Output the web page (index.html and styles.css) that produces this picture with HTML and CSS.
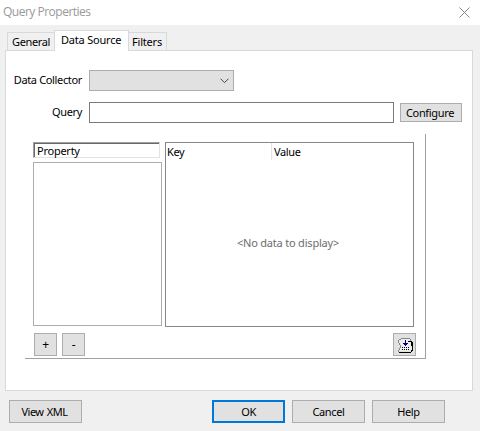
FILE: index.html
```html
<!DOCTYPE html>
<html lang="en">
<head>
<meta charset="utf-8">
<title>Query Properties</title>
<link rel="stylesheet" href="styles.css">
</head>
<body>
<div class="dialog">
  <header class="titlebar">
    <span class="title">Query Properties</span>
    <svg class="close" width="11" height="11" viewBox="0 0 11 11"><path d="M.5.5l10 10M10.5.5l-10 10"/></svg>
  </header>
  <nav class="tabs">
    <div class="tab">General</div>
    <div class="tab active">Data Source</div>
    <div class="tab last">Filters</div>
  </nav>
  <main class="page">
    <div class="row collector">
      <label>Data Collector</label>
      <div class="combo"><svg width="9" height="6" viewBox="0 0 9 6"><path d="M.5.7l4 4 4-4"/></svg></div>
    </div>
    <div class="row query">
      <label>Query</label>
      <div class="input"></div>
      <div class="button configure">Configure</div>
    </div>
    <section class="group">
      <div class="lists">
        <div class="left">
          <div class="property"><div class="property-inner">Property</div></div>
          <div class="listbox"></div>
        </div>
        <div class="grid">
          <div class="heads"><div class="head key">Key</div><div class="head">Value</div></div>
          <div class="empty">&lt;No data to display&gt;</div>
        </div>
      </div>
      <div class="tools">
        <div class="button small">+</div>
        <div class="button small">-</div>
        <div class="button small export">
          <svg width="16" height="16" viewBox="0 0 16 16" shape-rendering="crispEdges">
            <path fill="#ededed" d="M3 1h9l2 3v9H2V9L1 7V2z"/>
            <path fill="#858585" d="M3 0h9v1H3zM1 1h2v1H1zM0 2h1v3H0zM1 5h1v2H1zM2 7h1v3H2zM1 10h1v2H1zM0 12h1v2H0zM12 1h1v2h-1z"/>
            <path fill="#000" d="M10 3h3v1h-3zM13 3h1v2h-1zM14 4h1v3h-1zM13 4h1v4h-1zM14 7h1v6h-1zM13 12h1v2h-1zM1 14h12v1H1zM4 9h1v1H4zM6 9h1v1H6zM8 9h1v1H8zM10 9h1v1h-1zM4 11h1v1H4zM6 11h1v1H6zM8 11h1v1H8zM10 11h1v1h-1z"/>
            <path fill="#000080" d="M7 2h1v3H7zM5 5h5v1H5zM6 6h3v1H6zM7 7h1v1H7z"/>
          </svg>
        </div>
      </div>
    </section>
  </main>
  <footer class="footer">
    <div class="button wide view">View XML</div>
    <div class="button wide ok">OK</div>
    <div class="button wide">Cancel</div>
    <div class="button wide">Help</div>
  </footer>
</div>
</body>
</html>
```
FILE: styles.css
```css
* { box-sizing: border-box; }
body { margin: 0; background: #f0f0f0; color: #000; font: 11px/14px "Noto Sans", "Liberation Sans", sans-serif; letter-spacing: -.35px; }
.dialog { width: 480px; height: 431px; overflow: hidden; white-space: nowrap; }
.titlebar { height: 25px; background: #fff; display: flex; justify-content: space-between; padding: 4px 10px 0 3px; color: #999; font: 12px/16px "Open Sans", sans-serif; }
.title { letter-spacing: -.5px; }
.close { margin-top: 3px; fill: none; stroke: #858585; }
.tabs { height: 26px; display: flex; align-items: flex-end; padding-left: 7px; position: relative; }
.tab { width: 47px; height: 19px; border: 1px solid #d9d9d9; border-right: 0; padding: 2px 0 0 4px; }
.tab.active { width: 75px; height: 21px; border-right: 1px solid #d9d9d9; border-bottom: 0; background: #fff; padding-left: 6px; letter-spacing: -.2px; }
.tab.last { width: 38px; border-left: 0; border-right: 1px solid #d9d9d9; padding-left: 3px; letter-spacing: -.2px; }
.page { margin: -1px 7px 0 5px; height: 341px; border: 1px solid #d9d9d9; background: #fff; }
.row { display: flex; align-items: center; height: 21px; }
.row label { width: 76px; margin-right: 7px; padding-bottom: 2px; text-align: right; }
.collector { margin-top: 19px; }
.query { margin-top: 11px; }
.combo { width: 145px; height: 21px; background: #e1e1e1; border: 1px solid #adadad; display: flex; justify-content: flex-end; align-items: center; padding-right: 4px; }
.combo svg { fill: none; stroke: #444; }
.input { width: 305px; height: 21px; border: 1px solid #7a7a7a; margin-right: 6px; }
.button { background: #e1e1e1; border: 1px solid #adadad; display: flex; align-items: center; justify-content: center; }
.configure { width: 62px; height: 19px; padding-right: 2px; }
.group { margin: 11px 0 0 19px; width: 401px; height: 225px; border-right: 1px solid #a0a0a0; border-bottom: 1px solid #a0a0a0; padding: 8px 0 0 8px; }
.lists { display: flex; gap: 3px; height: 185px; }
.left { width: 129px; }
.property { width: 127px; height: 16px; border: 1px solid #e3e3e3; border-top-color: #a0a0a0; border-left-color: #a0a0a0; letter-spacing: -.25px; }
.property-inner { height: 14px; border-top: 1px solid #696969; border-left: 1px solid #696969; padding-left: 2px; line-height: 13px; }
.listbox { height: 164px; margin-top: 4px; border: 1px solid #adadad; }
.grid { width: 249px; height: 185px; border: 1px solid #828790; }
.heads { display: flex; height: 17px; }
.head { padding: 2px 0 0 2px; }
.key { width: 106px; border-right: 1px solid #e5e5e5; padding-left: 1px; }
.empty { height: 166px; display: flex; align-items: center; justify-content: center; color: #6d6d6d; padding-right: 3px; letter-spacing: -.2px; }
.tools { display: flex; gap: 5px; padding: 6px 0 0 1px; }
.small { width: 23px; height: 23px; font-size: 12px; }
.export { margin-left: 303px; padding: 3px 0 0 3px; }
.footer { display: flex; gap: 7px; padding: 9px 0 0 9px; }
.wide { width: 73px; height: 23px; padding: 0; }
.view { margin-right: 123px; padding-right: 2px; letter-spacing: -.5px; word-spacing: 1px; }
.ok { border: 2px solid #0078d7; }
```
